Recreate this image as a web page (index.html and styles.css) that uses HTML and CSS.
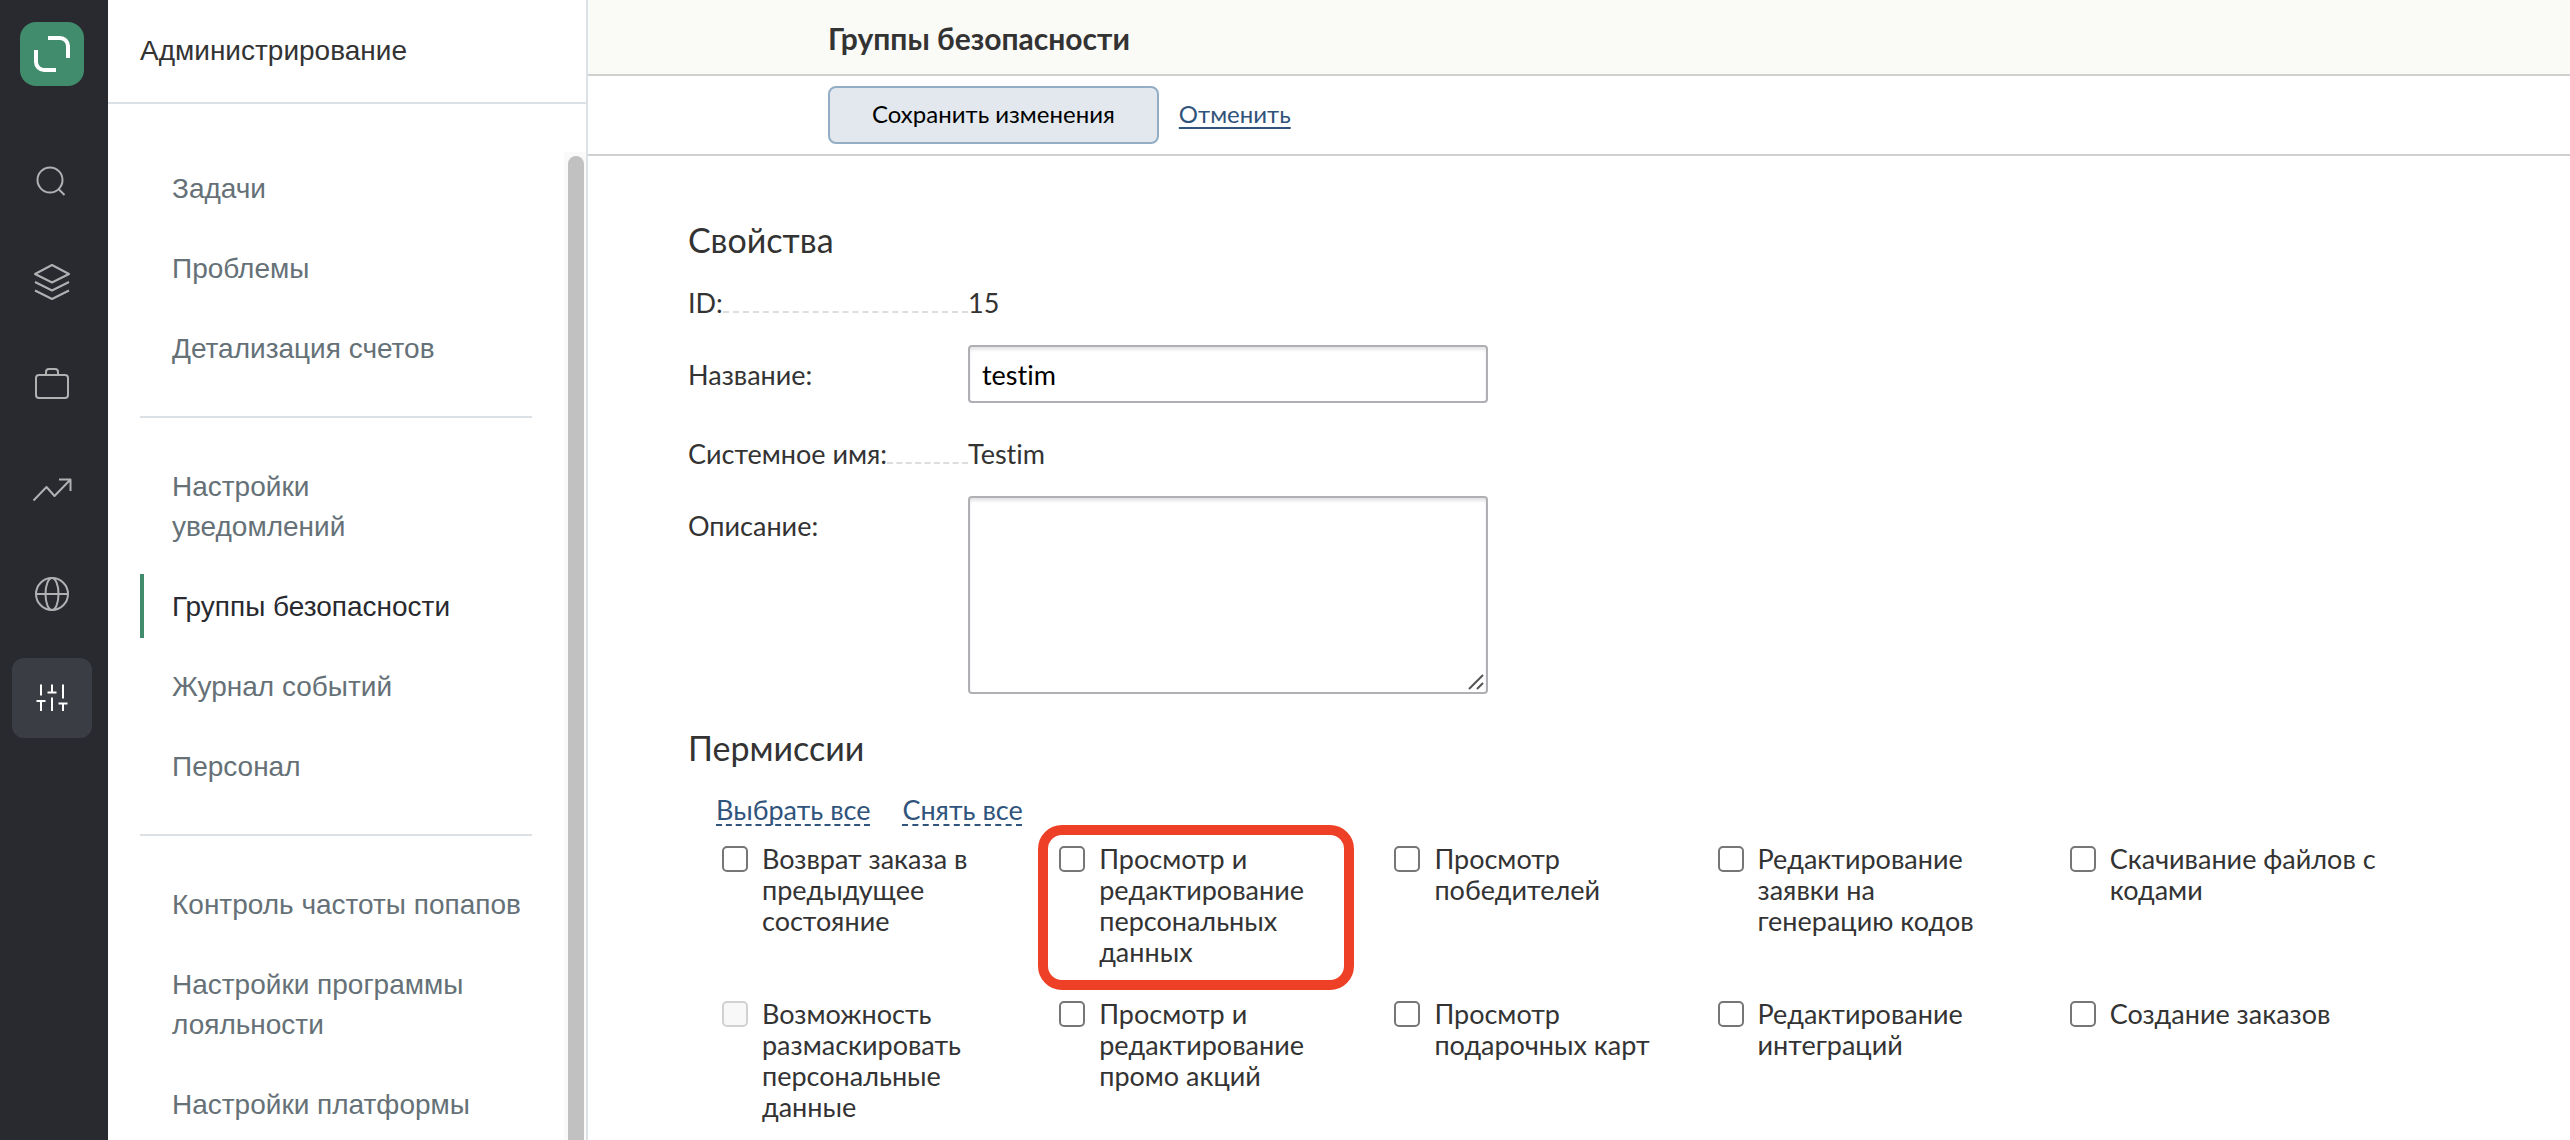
FILE: index.html
```
<!DOCTYPE html>
<html lang="ru">
<head>
<meta charset="utf-8">
<meta name="viewport" content="width=device-width, initial-scale=1">
<title>Группы безопасности</title>
<link rel="stylesheet" href="styles.css">
</head>
<body>
<div class="app">
  <nav class="rail" aria-label="Разделы">
    <a class="logo" href="#" aria-label="Главная">
      <svg viewBox="0 0 64 64" width="64" height="64"><path d="M28 16h12a8 8 0 0 1 8 8v12M16 28v12a8 8 0 0 0 8 8h12" fill="none" stroke="#fff" stroke-width="4"/></svg>
    </a>
    <a class="rail-link" href="#" aria-label="Поиск">
      <svg class="icon" viewBox="0 0 40 40"><circle cx="18" cy="22" r="12.500"/><path d="M26.500 31l6 6"/></svg>
    </a>
    <a class="rail-link" href="#" aria-label="Слои">
      <svg class="icon" viewBox="0 0 40 40"><path d="M20 3l17 9-17 8.500L3 12zM3 20l17 8.500L37 20M3 28.500l17 8.500 17-8.500"/></svg>
    </a>
    <a class="rail-link" href="#" aria-label="Портфель">
      <svg class="icon" viewBox="0 0 40 40"><rect x="4" y="9" width="32" height="23" rx="3"/><path d="M14 9V6a3 3 0 0 1 3-3h6a3 3 0 0 1 3 3v3"/></svg>
    </a>
    <a class="rail-link" href="#" aria-label="Отчёты">
      <svg class="icon" viewBox="0 0 40 40"><path d="M1.500 30.500L14.500 17l8 9L38 10M27 9.500h11.500V21"/></svg>
    </a>
    <a class="rail-link" href="#" aria-label="Сайты">
      <svg class="icon" viewBox="0 0 40 40"><circle cx="20" cy="20" r="16"/><ellipse cx="20" cy="20" rx="6.500" ry="16"/><path d="M4 20h32"/></svg>
    </a>
    <a class="rail-link rail-link-active" href="#" aria-label="Администрирование">
      <svg class="icon" viewBox="0 0 40 40"><path d="M9 6.500v11M4.500 23h9M9 23v10M20 6.500v8M15.500 14.500h9M20 19.500V33M31 6.500v14M26.500 25.500h9M31 25.500V33"/></svg>
    </a>
  </nav>

  <aside class="side">
    <h2 class="side-title">Администрирование</h2>
    <div class="side-scroll">
      <nav class="side-nav" aria-label="Администрирование">
        <a class="side-link" href="#">Задачи</a>
        <a class="side-link" href="#">Проблемы</a>
        <a class="side-link" href="#">Детализация счетов</a>
        <hr class="side-rule">
        <a class="side-link" href="#">Настройки<br>уведомлений</a>
        <a class="side-link side-link-active" href="#" aria-current="page">Группы безопасности</a>
        <a class="side-link" href="#">Журнал событий</a>
        <a class="side-link" href="#">Персонал</a>
        <hr class="side-rule">
        <a class="side-link" href="#">Контроль частоты попапов</a>
        <a class="side-link" href="#">Настройки программы лояльности</a>
        <a class="side-link" href="#">Настройки платформы</a>
      </nav>
      <div class="track"><div class="thumb"></div></div>
    </div>
  </aside>

  <form class="main">
    <header class="head"><h1 class="head-title">Группы безопасности</h1></header>
    <div class="toolbar">
      <button class="save" type="button">Сохранить изменения</button>
      <a class="cancel" href="#">Отменить</a>
    </div>

    <section class="section">
      <h2 class="section-title">Свойства</h2>
      <div class="row">
        <span class="row-label">ID:<i class="leader"></i></span>
        <span>15</span>
      </div>
      <div class="row row-input">
        <label class="row-label" for="name">Название:</label>
        <input class="field" id="name" type="text" value="testim">
      </div>
      <div class="row">
        <span class="row-label">Системное имя:<i class="leader"></i></span>
        <span>Testim</span>
      </div>
      <div class="row row-area">
        <label class="row-label" for="about">Описание:</label>
        <div class="area">
          <textarea class="field field-area" id="about"></textarea>
          <svg class="grip" viewBox="0 0 16 16" width="16" height="16"><path d="M1 15L15 1M9 15l6-6" stroke="#555" stroke-width="2" fill="none"/></svg>
        </div>
      </div>
    </section>

    <section class="section section-perms">
      <h2 class="section-title">Пермиссии</h2>
      <div class="bulk">
        <a class="bulk-link" href="#">Выбрать все</a>
        <a class="bulk-link" href="#">Снять все</a>
      </div>
      <div class="perms">
        <label class="perm"><input class="box" type="checkbox"><span>Возврат заказа в предыдущее состояние</span></label>
        <label class="perm perm-marked"><input class="box" type="checkbox"><span>Просмотр и редактирование персональных данных</span></label>
        <label class="perm"><input class="box" type="checkbox"><span>Просмотр победителей</span></label>
        <label class="perm"><input class="box" type="checkbox"><span>Редактирование заявки на генерацию кодов</span></label>
        <label class="perm"><input class="box" type="checkbox"><span>Скачивание файлов с кодами</span></label>
        <label class="perm"><input class="box" type="checkbox" disabled><span>Возможность размаскировать персональные данные</span></label>
        <label class="perm"><input class="box" type="checkbox"><span>Просмотр и редактирование промо акций</span></label>
        <label class="perm"><input class="box" type="checkbox"><span>Просмотр подарочных карт</span></label>
        <label class="perm"><input class="box" type="checkbox"><span>Редактирование интеграций</span></label>
        <label class="perm"><input class="box" type="checkbox"><span>Создание заказов</span></label>
      </div>
    </section>
  </form>
</div>
</body>
</html>
```
FILE: styles.css
```
* {
  box-sizing: border-box;
}

body {
  margin: 0;
  background: #fff;
  color: #333;
  font-family: Lato, "Noto Sans", sans-serif;
  font-size: 27px;
  font-variant-ligatures: none;
  line-height: 31px;
}

h1,
h2 {
  margin: 0;
  font-weight: 400;
}

.app {
  display: flex;
  height: 100vh;
  overflow: hidden;
}

/* Icon rail */
.rail {
  display: flex;
  flex: none;
  flex-direction: column;
  align-items: center;
  gap: 24px;
  width: 108px;
  padding: 22px 4px 0 0;
  background: #292a2f;
}

.logo {
  height: 64px;
  margin-bottom: 28px;
  border-radius: 16px;
  background: #408c6c;
}

.rail-link {
  display: flex;
  align-items: center;
  justify-content: center;
  width: 80px;
  height: 80px;
  border-radius: 12px;
}

.rail-link-active {
  background: #3a3d43;
}

.icon {
  width: 40px;
  height: 40px;
  fill: none;
  stroke: #b0b1b3;
  stroke-width: 2;
  stroke-linejoin: round;
}

.rail-link-active .icon {
  stroke: #fff;
}

/* Section menu */
.side {
  display: flex;
  flex: none;
  flex-direction: column;
  width: 480px;
  border-right: 2px solid #dbe1e4;
  font-family: "Liberation Sans", Arial, sans-serif;
  font-size: 28px;
  line-height: 40px;
}

.side-title {
  padding: 31px 32px;
  border-bottom: 2px solid #dbe1e4;
  font-size: 28px;
}

.side-scroll {
  display: flex;
  flex: 1;
  justify-content: space-between;
  min-height: 0;
}

.side-nav {
  width: 424px;
  padding: 44px 0 0 32px;
}

.side-link {
  display: block;
  padding: 21px 0 19px 32px;
  color: #657177;
  text-decoration: none;
}

.side-link-active {
  background: linear-gradient(#408c6c, #408c6c) left center / 4px 64px no-repeat;
  color: #292a2f;
}

.side-rule {
  height: 2px;
  margin: 28px 0;
  border: 0;
  background: #dbe1e4;
}

.track {
  width: 22px;
  margin-top: 48px;
  padding: 4px 2px 0 4px;
  background: #fafafa;
}

.thumb {
  height: 100%;
  border-radius: 8px 8px 0 0;
  background: #c1c1c1;
}

/* Form */
.main {
  flex: 1;
  min-width: 0;
}

.head {
  padding: 21px 240px 18px;
  border-bottom: 2px solid #d0d0d0;
  background: #fafaf6;
}

.head-title {
  font-size: 30px;
  font-weight: 700;
  line-height: 35px;
}

.toolbar {
  display: flex;
  align-items: center;
  gap: 20px;
  padding: 10px 240px;
  border-bottom: 2px solid #d0d0d0;
  font-size: 24px;
}

.save {
  height: 58px;
  padding: 0 42px 4px;
  border: 2px solid #93adc4;
  border-radius: 8px;
  background: #e2e8ee;
  color: #000;
  font: inherit;
}

.cancel {
  padding-bottom: 4px;
}

.cancel,
.bulk-link {
  color: #30547b;
  text-decoration: underline 2px;
  text-underline-offset: 4px;
  text-decoration-skip-ink: none;
}

.section {
  padding: 64px 128px 0 100px;
}

.section-perms {
  padding-top: 34px;
}

.section-title {
  font-size: 34px;
  line-height: 40px;
}

.row {
  display: flex;
  padding-top: 27px;
}

.row-label {
  display: flex;
  align-items: baseline;
  width: 280px;
}

.leader {
  flex: 1;
  border-bottom: 2px dashed #ddd;
}

.row-input {
  align-items: center;
  padding-bottom: 8px;
}

.field {
  width: 520px;
  height: 58px;
  padding: 0 12px;
  border: 2px solid #b0b0b4;
  border-radius: 4px;
  background: #fff;
  box-shadow: inset 0 3px 3px #e6e6e8;
  color: #000;
  font: inherit;
}

.area {
  position: relative;
}

.field-area {
  display: block;
  height: 198px;
  resize: none;
}

.grip {
  position: absolute;
  right: 4px;
  bottom: 4px;
}

.row-area .row-label {
  padding-top: 14px;
}

.bulk {
  display: flex;
  gap: 32px;
  padding: 26px 0 0 28px;
}

.bulk-link {
  text-decoration-style: dashed;
}

.perms {
  display: grid;
  grid-template-columns: 337fr 335fr 323fr 352fr 372fr;
  row-gap: 31px;
  padding: 18px 0 0 34px;
}

.perm {
  position: relative;
  display: flex;
  align-items: flex-start;
  gap: 14px;
  padding-right: 60px;
}

.box {
  flex: none;
  width: 26px;
  height: 26px;
  margin: 3px 0 0;
  border: 2px solid #767676;
  border-radius: 5px;
  background: #fff;
  appearance: none;
}

.box:disabled {
  border-color: #d1d1d1;
  background: #f8f8f8;
}

/* Red outline around the highlighted permission */
.perm-marked::after {
  content: "";
  position: absolute;
  inset: -18px 40px -23px -21px;
  border: 10px solid #ed4026;
  border-radius: 24px;
}
```
